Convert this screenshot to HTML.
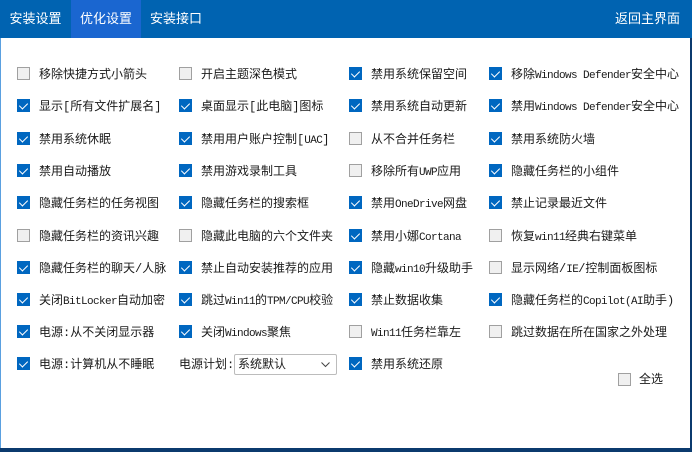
<!DOCTYPE html>
<html><head><meta charset="utf-8"><style>
*{margin:0;padding:0;box-sizing:border-box}
body{width:692px;height:452px;background:#0b3a6e;position:relative;overflow:hidden;font-family:"Liberation Mono","Noto Sans CJK SC",monospace;font-size:12px;color:#1a1a1a}
.hdr{position:absolute;left:0;top:0;width:692px;height:38px;background:#0063b1}
.tab{position:absolute;top:0;height:38px;line-height:38px;color:#fff;font-family:"Liberation Sans","Noto Sans CJK SC",sans-serif;font-size:13px}
.body{position:absolute;left:0;top:38px;width:690px;height:410px;background:#fff;border-left:1px solid #5aa0e0}
.cb{position:absolute;width:13px;height:13px;border:1px solid #a0a0a0;background:#f0f0f0}
.cb.on{background:#0067c0;border-color:#0067c0}
.cb.on::after{content:"";position:absolute;left:3px;top:1px;width:4px;height:7px;border:solid #fff;border-width:0 1.5px 1.5px 0;transform:rotate(45deg)}
.t{position:absolute;white-space:nowrap;line-height:14px}
.m{font-size:11px;letter-spacing:-0.6px}
.combo{position:absolute;left:234px;top:354px;width:103px;height:21px;border:1px solid #bcbcbc;border-radius:2px;background:#fff}
</style></head><body>
<div class="hdr"></div>
<div class="tab" style="left:0;width:71px;text-align:center">安装设置</div>
<div class="tab" style="left:71px;width:70px;background:#1a66d0;text-align:center">优化设置</div>
<div class="tab" style="left:141px;width:70px;text-align:center">安装接口</div>
<div class="tab" style="left:615px">返回主界面</div>
<div class="body"></div>
<div id="g"></div>
<div class="t" style="left:179px;top:358px">电源计划:</div>
<div class="combo"><span class="t" style="left:3px;top:3px">系统默认</span>
<svg style="position:absolute;right:6px;top:7px" width="9" height="6"><path d="M0.5 0.5L4.5 4.5L8.5 0.5" fill="none" stroke="#444" stroke-width="1"/></svg></div>
<div class="cb" style="left:618px;top:373px"></div>
<div class="t" style="left:639px;top:373px">全选</div>
<script>
var cols=[17,179,349,489];
var rows=[74,106,139,171,203,236,268,300,332,364];
var d=[
[[0,"移除快捷方式小箭头"],[0,"开启主题深色模式"],[1,"禁用系统保留空间"],[1,"移除<m>Windows Defender</m>安全中心"]],
[[1,"显示[所有文件扩展名]"],[1,"桌面显示[此电脑]图标"],[1,"禁用系统自动更新"],[1,"禁用<m>Windows Defender</m>安全中心"]],
[[1,"禁用系统休眠"],[1,"禁用用户账户控制[<m>UAC</m>]"],[0,"从不合并任务栏"],[1,"禁用系统防火墙"]],
[[1,"禁用自动播放"],[1,"禁用游戏录制工具"],[0,"移除所有<m>UWP</m>应用"],[1,"隐藏任务栏的小组件"]],
[[1,"隐藏任务栏的任务视图"],[1,"隐藏任务栏的搜索框"],[1,"禁用<m>OneDrive</m>网盘"],[1,"禁止记录最近文件"]],
[[0,"隐藏任务栏的资讯兴趣"],[0,"隐藏此电脑的六个文件夹"],[1,"禁用小娜<m>Cortana</m>"],[0,"恢复<m>win11</m>经典右键菜单"]],
[[1,"隐藏任务栏的聊天/人脉"],[1,"禁止自动安装推荐的应用"],[1,"隐藏<m>win10</m>升级助手"],[0,"显示网络/<m>IE</m>/控制面板图标"]],
[[1,"关闭<m>BitLocker</m>自动加密"],[1,"跳过<m>Win11</m>的<m>TPM/CPU</m>校验"],[1,"禁止数据收集"],[1,"隐藏任务栏的<m>Copilot(AI</m>助手)"]],
[[1,"电源:从不关闭显示器"],[1,"关闭<m>Windows</m>聚焦"],[0,"<m>Win11</m>任务栏靠左"],[0,"跳过数据在所在国家之外处理"]],
[[1,"电源:计算机从不睡眠"],null,[1,"禁用系统还原"],null]];
var h="";
d.forEach(function(r,i){r.forEach(function(c,j){if(!c)return;var y=rows[i]-7;
h+='<div class="cb'+(c[0]?' on':'')+'" style="left:'+cols[j]+'px;top:'+y+'px"></div>';
h+='<div class="t" style="left:'+(cols[j]+22)+'px;top:'+(y+1)+'px">'+c[1].replace(/<m>/g,'<span class="m">').replace(/<\/m>/g,'</span>')+'</div>';});});
document.getElementById("g").innerHTML=h;
</script>
</body></html>
